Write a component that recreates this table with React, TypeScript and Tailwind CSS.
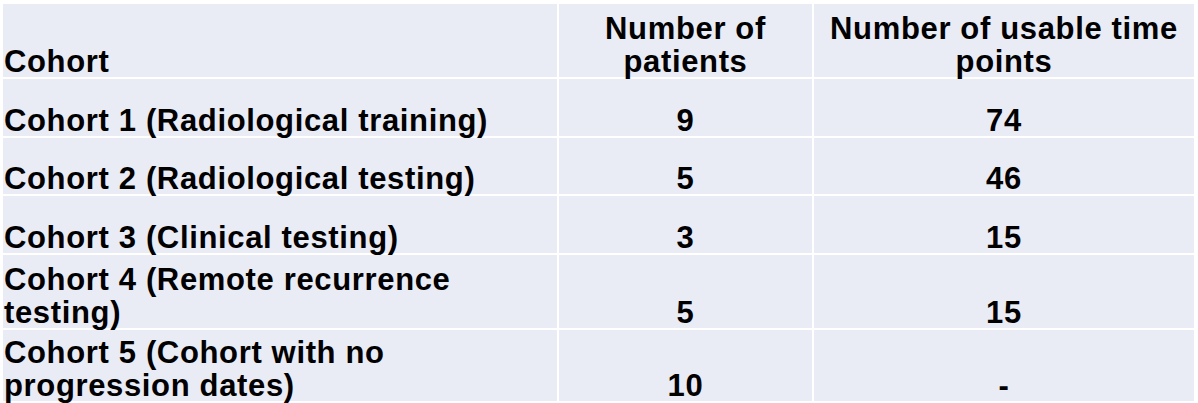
import React from "react";

const rows: { label: React.ReactNode; h: string; a: string; b: string }[] = [
  { label: "Cohort 1 (Radiological training)", h: "h-[57px]", a: "9", b: "74" },
  { label: "Cohort 2 (Radiological testing)", h: "h-[56px]", a: "5", b: "46" },
  { label: "Cohort 3 (Clinical testing)", h: "h-[57px]", a: "3", b: "15" },
  {
    label: (
      <>
        Cohort 4 (Remote recurrence
        <br />
        testing)
      </>
    ),
    h: "h-[73px]",
    a: "5",
    b: "15",
  },
  {
    label: (
      <>
        Cohort 5 (Cohort with no
        <br />
        progression dates)
      </>
    ),
    h: "h-[71px]",
    a: "10",
    b: "-",
  },
];

export default function App() {
  const cell =
    "bg-[#e9ebf5] flex items-end text-black font-bold text-[31px] leading-[33px] tracking-[0.65px]";
  return (
    <div
      className="w-[1198px] h-[403px] bg-white pt-[4px] pl-[3px] overflow-hidden"
      style={{ fontFamily: '"Liberation Sans", Arial, sans-serif' }}
    >
      <div className="grid grid-cols-[554px_253px_380px] gap-[2px]">
        <div className={`${cell} h-[73px] pl-px`}>
          <div className="-mb-[1px]">Cohort</div>
        </div>
        <div className={`${cell} h-[73px] justify-center text-center`}>
          <div className="-mb-[1px]">
            Number of
            <br />
            patients
          </div>
        </div>
        <div className={`${cell} h-[73px] justify-center text-center`}>
          <div className="-mb-[1px]">
            Number of usable time
            <br />
            points
          </div>
        </div>
        {rows.map((r, i) => (
          <React.Fragment key={i}>
            <div className={`${cell} ${r.h} pl-px`}>
              <div className="-mb-[1px]">{r.label}</div>
            </div>
            <div className={`${cell} ${r.h} justify-center text-center`}>
              <div className="-mb-[1px]">{r.a}</div>
            </div>
            <div className={`${cell} ${r.h} justify-center text-center`}>
              <div className="-mb-[1px]">{r.b}</div>
            </div>
          </React.Fragment>
        ))}
      </div>
    </div>
  );
}
